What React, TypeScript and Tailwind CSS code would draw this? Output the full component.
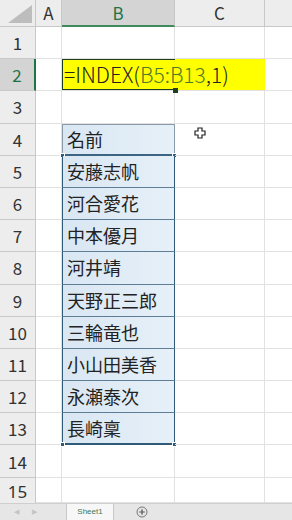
import React from "react";

const names = [
  "名前",
  "安藤志帆",
  "河合愛花",
  "中本優月",
  "河井靖",
  "天野正三郎",
  "三輪竜也",
  "小山田美香",
  "永瀬泰次",
  "長崎稟",
];

const font = { fontFamily: "'Noto Sans CJK JP', 'Noto Sans', sans-serif" };

const RowHead = ({ n, active }: { n: number; active?: boolean }) => (
  <div
    className={
      active
        ? "w-[36px] shrink-0 flex items-center justify-center leading-none bg-[#d4d4d4] text-[#217346] border-r-2 border-r-[#217346] border-b border-b-[#c8c8c8] text-[17px]"
        : "w-[36px] shrink-0 flex items-center justify-center leading-none bg-[#ededed] text-[#333] border-r border-r-[#c8c8c8] border-b border-b-[#c8c8c8] text-[17px]"
    }
  >
    {n}
  </div>
);

const Handle = ({ className }: { className: string }) => (
  <div className={"absolute w-[5px] h-[5px] bg-[#2f5a78] border border-white " + className} />
);

export default function App() {
  const rows = Array.from({ length: 15 }, (_, i) => i + 1);

  return (
    <div className="w-[292px] h-[520px] overflow-hidden bg-white flex flex-col" style={font}>
      <div className="flex-1 overflow-hidden">
        {/* column headers */}
        <div className="flex h-[27px]">
          <div className="w-[36px] shrink-0 bg-[#ededed] border-r border-b border-[#c8c8c8] relative">
            <svg className="absolute right-[3px] bottom-[3px]" width="24" height="18" viewBox="0 0 24 18">
              <polygon points="24,0 24,18 0,18" fill="#bdbdbd" />
            </svg>
          </div>
          <div className="w-[26px] shrink-0 bg-[#ededed] border-r border-b border-[#c8c8c8] flex items-center justify-center text-[17px] text-[#333]">
            A
          </div>
          <div className="w-[113px] shrink-0 bg-[#d4d4d4] border-r border-r-[#c8c8c8] border-b-2 border-b-[#3f8a5a] flex items-center justify-center text-[17px] text-[#217346]">
            B
          </div>
          <div className="w-[90px] shrink-0 bg-[#ededed] border-r border-b border-[#c8c8c8] flex items-center justify-center text-[17px] text-[#333]">
            C
          </div>
          <div className="flex-1 bg-[#ededed] border-b border-[#c8c8c8]" />
        </div>

        {rows.map((n) => {
          if (n === 2) {
            return (
              <div key={n} className="flex h-[32.2px]">
                <RowHead n={n} active />
                <div className="w-[26px] shrink-0 border-r border-b border-[#e1e1e1]" />
                <div className="w-[203px] shrink-0 relative bg-[#ffff00] border-b border-[#e1e1e1] flex items-center pl-[2px] text-[21px] font-light text-[#222] whitespace-nowrap">
                  =INDEX(<span className="text-[#4f7a28]">B5:B13</span>,1)
                  <div className="absolute left-0 top-0 w-[113px] h-full border-t border-l border-b border-[#1f3d1f]" />
                  <div className="absolute left-[111px] bottom-[-3px] w-[5px] h-[5px] bg-[#1f3d1f]" />
                </div>
                <div className="flex-1 border-b border-[#e1e1e1]" />
              </div>
            );
          }

          const idx = n - 4;
          const inTable = idx >= 0 && idx < names.length;

          return (
            <div key={n} className={"flex " + (n === 15 ? "h-[25px]" : "h-[32.2px]")}>
              {n === 15 ? (
                <div
                  className="w-[36px] shrink-0 flex items-center justify-center leading-[18px] pt-[3px] bg-[#ededed] text-[#333] border-r border-r-[#c8c8c8] text-[17px]"
                  style={{ fontFamily: "'Noto Sans', sans-serif" }}
                >
                  {n}
                </div>
              ) : (
                <RowHead n={n} />
              )}
              <div className="w-[26px] shrink-0 border-r border-b border-[#e1e1e1]" />
              {inTable ? (
                <div
                  className={
                    "w-[113px] shrink-0 relative flex items-center pl-[4px] text-[18px] text-[#222] bg-gradient-to-r from-[#d9e7f3] to-[#e6f0f8] border-l border-r " +
                    (idx === 0
                      ? "border-t border-[#8a9aa8] border-b-2 border-b-[#3c6584]"
                      : idx === names.length - 1
                      ? "border-[#2f5a78] border-b-2"
                      : "border-[#2f5a78] border-b border-b-[#5f7d94]")
                  }
                >
                  {names[idx]}
                  {(idx === 0 || idx === names.length - 1) && (
                    <>
                      <Handle className="left-[-3px] bottom-[-4px]" />
                      <Handle className="right-[-3px] bottom-[-4px]" />
                    </>
                  )}
                </div>
              ) : (
                <div className="w-[113px] shrink-0 border-r border-b border-[#e1e1e1]" />
              )}
              <div className="w-[90px] shrink-0 border-r border-b border-[#e1e1e1] relative">
                {n === 4 && (
                  <svg className="absolute left-[19px] top-[3px]" width="12" height="12" viewBox="0 0 12 12">
                    <path
                      d="M4 1h4v3h3v4H8v3H4V8H1V4h3z"
                      fill="#fff"
                      stroke="#222"
                      strokeWidth="1.2"
                    />
                  </svg>
                )}
              </div>
              <div className="flex-1 border-b border-[#e1e1e1]" />
            </div>
          );
        })}
      </div>

      {/* sheet tabs */}
      <div className="h-[17px] shrink-0 bg-[#e6e6e6] border-t border-[#cfcfcf] flex items-stretch" style={{ fontFamily: "'Liberation Sans', sans-serif" }}>
        <div className="w-[66px] flex items-center gap-[13px] pl-[14px] text-[7px] text-[#c4c4c4]">
          <span>◀</span>
          <span>▶</span>
        </div>
        <div className="w-[48px] bg-[#f7f7f7] border-l border-r border-[#c8c8c8] flex items-center justify-center text-[8px] text-[#3f7a55]">
          Sheet1
        </div>
        <div className="pl-[22px] flex items-center">
          <svg width="12" height="12" viewBox="0 0 12 12">
            <circle cx="6" cy="6" r="5" fill="none" stroke="#777" strokeWidth="1" />
            <path d="M6 3.2v5.6M3.2 6h5.6" stroke="#555" strokeWidth="1.2" />
          </svg>
        </div>
      </div>
    </div>
  );
}
